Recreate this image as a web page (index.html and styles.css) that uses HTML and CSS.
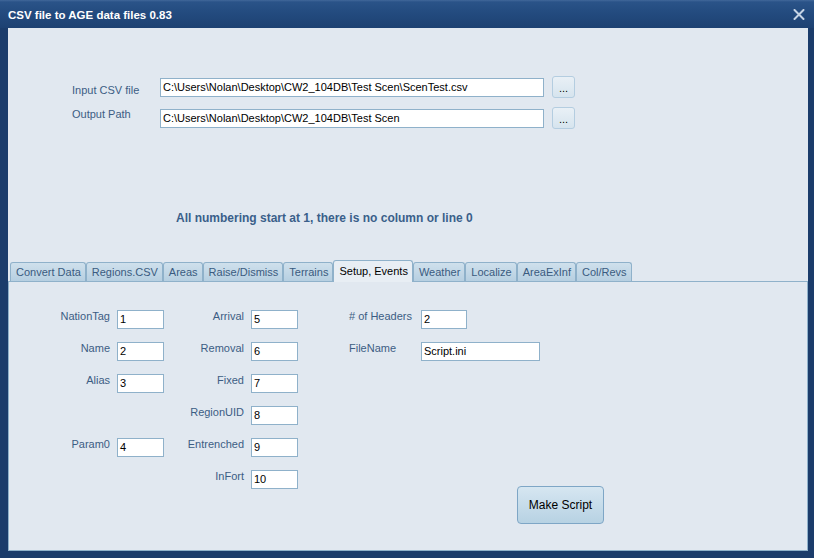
FILE: index.html
```html
<!DOCTYPE html>
<html>
<head>
<meta charset="utf-8">
<link rel="stylesheet" href="styles.css">
</head>
<body>
<div class="window">
  <div class="titlebar">
    <span class="title">CSV file to AGE data files 0.83</span>
    <svg class="close" width="12" height="11" viewBox="0 0 12 11"><path d="M1.5 1 L10.5 10 M10.5 1 L1.5 10" stroke="#c6d4e5" stroke-width="2" stroke-linecap="round"/></svg>
  </div>
  <div class="client">
    <div class="paths">
      <div class="path-row">
        <span class="path-label low">Input CSV file</span>
        <div class="textbox path-box">C:\Users\Nolan\Desktop\CW2_104DB\Test Scen\ScenTest.csv</div>
        <div class="dots">...</div>
      </div>
      <div class="path-row second">
        <span class="path-label high">Output Path</span>
        <div class="textbox path-box">C:\Users\Nolan\Desktop\CW2_104DB\Test Scen</div>
        <div class="dots">...</div>
      </div>
    </div>
    <p class="note">All numbering start at 1, there is no column or line 0</p>
    <div class="tabs">
      <div class="tabstrip">
        <div class="tab">Convert Data</div>
        <div class="tab">Regions.CSV</div>
        <div class="tab">Areas</div>
        <div class="tab">Raise/Dismiss</div>
        <div class="tab">Terrains</div>
        <div class="tab selected">Setup, Events</div>
        <div class="tab">Weather</div>
        <div class="tab">Localize</div>
        <div class="tab">AreaExInf</div>
        <div class="tab">Col/Revs</div>
      </div>
      <div class="panel">
        <div class="fields">
          <span class="lbl">NationTag</span><div class="textbox num">1</div>
          <span class="lbl">Arrival</span><div class="textbox num">5</div>
          <span></span><span class="lbl3">#&nbsp;of Headers</span><div class="cell3"><div class="textbox num hdr">2</div></div>

          <span class="lbl">Name</span><div class="textbox num">2</div>
          <span class="lbl">Removal</span><div class="textbox num">6</div>
          <span></span><span class="lbl3">FileName</span><div class="cell3"><div class="textbox file">Script.ini</div></div>

          <span class="lbl">Alias</span><div class="textbox num">3</div>
          <span class="lbl">Fixed</span><div class="textbox num">7</div>
          <span></span><span></span><span></span>

          <span></span><span></span>
          <span class="lbl">RegionUID</span><div class="textbox num">8</div>
          <span></span><span></span><span></span>

          <span class="lbl">Param0</span><div class="textbox num">4</div>
          <span class="lbl">Entrenched</span><div class="textbox num">9</div>
          <span></span><span></span><span></span>

          <span></span><span></span>
          <span class="lbl">InFort</span><div class="textbox num">10</div>
          <span></span><span></span>
          <div class="btn-cell"><div class="make-btn">Make Script</div></div>
        </div>
      </div>
    </div>
  </div>
</div>
</body>
</html>
```
FILE: styles.css
```css
html, body {
  margin: 0;
  padding: 0;
}
body {
  width: 814px;
  height: 558px;
  overflow: hidden;
  background: #1b3c6b;
  font-family: "Liberation Sans", Arial, sans-serif;
  font-size: 11px;
}
.window {
  display: flex;
  flex-direction: column;
  height: 558px;
}
.titlebar {
  flex: none;
  height: 28px;
  display: flex;
  align-items: center;
  justify-content: space-between;
  padding: 0 9px 0 8px;
  background: linear-gradient(#41689a 0, #2a5388 2px, #244c80 40%, #1d4172 100%);
}
.title {
  color: #ffffff;
  font-weight: bold;
  font-size: 11.5px;
  margin-top: 1px;
}
.close {
  display: block;
  margin-top: 0;
}
.client {
  flex: 1;
  margin: 0 6px 7px 8px;
  background: #e1e8f0;
  display: flex;
  flex-direction: column;
}
.paths {
  padding: 48px 0 0 64px;
}
.path-row {
  display: flex;
  align-items: center;
  height: 22px;
}
.path-row.second {
  margin-top: 9px;
}
.path-label {
  width: 88px;
  color: #3c5d84;
  line-height: 13px;
}
.path-label.low {
  margin-top: 6px;
}
.path-label.high {
  margin-bottom: 8px;
}
.textbox {
  box-sizing: border-box;
  height: 19px;
  background: #ffffff;
  border: 1px solid #8fb1ca;
  color: #000;
  line-height: 17px;
  padding-left: 2px;
  white-space: nowrap;
  overflow: hidden;
}
.path-box {
  width: 384px;
}
.dots {
  box-sizing: border-box;
  width: 23px;
  height: 22px;
  margin-left: 8px;
  border: 1px solid #b4cde0;
  border-radius: 3px;
  background: linear-gradient(#e9f0f6, #d6e4ee);
  color: #000;
  text-align: center;
  line-height: 22px;
}
.note {
  margin: 82px 0 0 168px;
  line-height: 14px;
  font-size: 12px;
  font-weight: bold;
  color: #3a5f8a;
}
.tabs {
  flex: 1;
  display: flex;
  flex-direction: column;
  margin-top: 35px;
}
.tabstrip {
  flex: none;
  height: 21px;
  display: flex;
  align-items: flex-end;
  padding-left: 2px;
  position: relative;
  z-index: 1;
}
.tab {
  box-sizing: border-box;
  height: 19px;
  padding: 0 4px 0 5px;
  border: 1px solid #8fb1ca;
  border-bottom: none;
  border-radius: 3px 3px 0 0;
  background: linear-gradient(#cfe0ec, #b6cfe1);
  color: #3a5b80;
  line-height: 18px;
  white-space: nowrap;
}
.tab.selected {
  height: 22px;
  margin-bottom: -1px;
  background: #e8eef4;
  color: #000;
  line-height: 20px;
}
.panel {
  flex: 1;
  border: 1px solid #8fb1ca;
  background: #e1e8f0;
  padding-top: 25px;
}
.fields {
  display: grid;
  grid-template-columns: 108px 47px 87px 47px 51px 72px 183px;
  grid-auto-rows: 32px;
}
.lbl {
  text-align: right;
  padding: 3px 7px 0 0;
  color: #3c5d84;
  line-height: 13px;
  white-space: nowrap;
}
.lbl3 {
  padding-top: 3px;
  color: #3c5d84;
  line-height: 13px;
  white-space: nowrap;
}
.fields .textbox {
  margin-top: 3px;
}
.num {
  width: 47px;
}
.hdr {
  width: 46px;
}
.file {
  width: 119px;
}
.btn-cell {
  grid-row: span 2;
  display: flex;
  justify-content: flex-end;
  align-items: flex-start;
}
.make-btn {
  box-sizing: border-box;
  width: 87px;
  height: 38px;
  margin-top: 19px;
  border: 1px solid #7ea6c6;
  border-radius: 4px;
  background: linear-gradient(#d6e6f1, #b7d2e3);
  color: #000;
  font-size: 12px;
  text-align: center;
  line-height: 36px;
}
```
